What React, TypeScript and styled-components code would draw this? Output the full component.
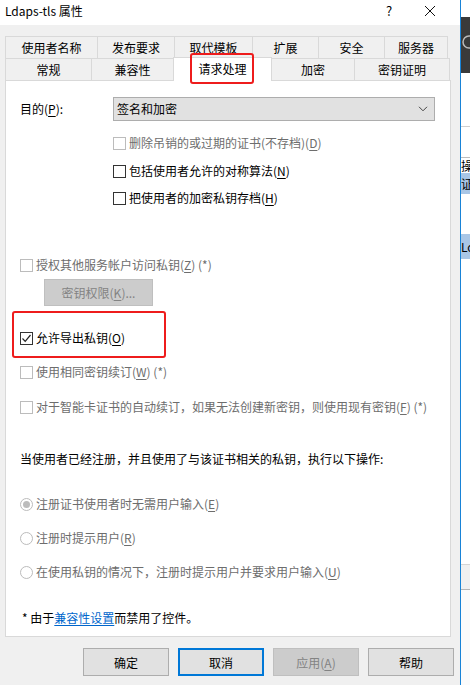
import React from "react";
import styled, { createGlobalStyle } from "styled-components";

const Global = createGlobalStyle`
  html, body { margin: 0; padding: 0; }
  body {
    width: 470px; height: 685px; overflow: hidden; background: #ffffff;
    font-family: "Noto Sans CJK SC", "Noto Sans", sans-serif;
    font-size: 12px; color: #000;
  }
  u { text-underline-offset: 2px; }
`;

const Screen = styled.div`
  display: flex;
  width: 470px;
  height: 685px;
`;

const Dialog = styled.div`
  width: 460px;
  height: 685px;
  display: flex;
  flex-direction: column;
  background: #f0f0f0;
  border-right: 1px solid #1883d7;
`;

const TitleBar = styled.div`
  height: 25px;
  background: #fff;
  display: flex;
  align-items: center;
  padding: 0 0 4px 5px;
  box-sizing: border-box;
`;

const TitleText = styled.div`
  flex: 1;
  font-size: 12px;
  line-height: 16px;
`;

const TitleBtn = styled.div<{ $w: number }>`
  width: ${(p) => p.$w}px;
  display: flex;
  justify-content: center;
  align-items: center;
  font-size: 13px;
  line-height: 16px;
`;

const Body = styled.div`
  flex: 1;
  padding: 11px 0 0 5px;
  display: flex;
  flex-direction: column;
`;

const TabRow = styled.div`
  display: flex;
  height: 22px;
  align-items: flex-start;
`;

const Tab = styled.div<{ $w: number; $last?: boolean }>`
  width: ${(p) => p.$w}px;
  height: 22px;
  box-sizing: border-box;
  border-top: 1px solid #d9d9d9;
  border-left: 1px solid #d9d9d9;
  border-right: ${(p) => (p.$last ? "1px solid #d9d9d9" : "none")};
  display: flex;
  justify-content: center;
  align-items: center;
  font-size: 12px;
  line-height: 16px;
  padding-top: 1px;
`;

const ActiveTab = styled.div<{ $w: number }>`
  position: relative;
  z-index: 2;
  width: ${(p) => p.$w}px;
  height: 24px;
  margin-top: -1px;
  box-sizing: border-box;
  background: #fff;
  border: 1px solid #d9d9d9;
  border-bottom: none;
  display: flex;
  justify-content: center;
  align-items: center;
  font-size: 12px;
  line-height: 16px;
  padding-bottom: 1px;
`;

const RedMark = styled.span<{ $l: number; $t: number; $w: number; $h: number }>`
  position: absolute;
  left: ${(p) => p.$l}px;
  top: ${(p) => p.$t}px;
  width: ${(p) => p.$w}px;
  height: ${(p) => p.$h}px;
  border: 2px solid #ee1c1c;
  border-radius: 3px;
  box-sizing: border-box;
  pointer-events: none;
`;

const Panel = styled.div`
  width: 446px;
  height: 557px;
  box-sizing: border-box;
  background: #fff;
  border: 1px solid #d9d9d9;
  padding: 16px 0 0 14px;
  display: flex;
  flex-direction: column;
`;

const Row = styled.div<{ $top: number; $indent?: number; $h?: number }>`
  position: relative;
  display: flex;
  align-items: center;
  margin-top: ${(p) => p.$top}px;
  margin-left: ${(p) => p.$indent || 0}px;
  height: ${(p) => p.$h || 16}px;
  line-height: 16px;
  white-space: nowrap;
`;

const Label = styled.span<{ $disabled?: boolean; $w?: number }>`
  color: ${(p) => (p.$disabled ? "#6d6d6d" : "#000")};
  ${(p) => (p.$w ? `width: ${p.$w}px;` : "")}
`;

const Box = styled.span<{ $disabled?: boolean }>`
  width: 13px;
  height: 13px;
  box-sizing: border-box;
  border: 1px solid ${(p) => (p.$disabled ? "#bcbcbc" : "#333")};
  background: #fff;
  margin-right: 3px;
  display: flex;
  align-items: center;
  justify-content: center;
  flex-shrink: 0;
`;

const Radio = styled.span<{ $checked?: boolean }>`
  width: 13px;
  height: 13px;
  box-sizing: border-box;
  border-radius: 50%;
  border: 1px solid #bcbcbc;
  background: #fff;
  margin-right: 3px;
  display: flex;
  align-items: center;
  justify-content: center;
  flex-shrink: 0;
  &::after {
    content: "";
    display: ${(p) => (p.$checked ? "block" : "none")};
    width: 7px;
    height: 7px;
    border-radius: 50%;
    background: #bcbcbc;
  }
`;

const Select = styled.div`
  width: 322px;
  height: 24px;
  box-sizing: border-box;
  background: #e1e1e1;
  border: 1px solid #adadad;
  display: flex;
  align-items: center;
  padding: 0 6px 0 3px;
  justify-content: space-between;
`;

const PermButton = styled.div`
  width: 109px;
  height: 27px;
  box-sizing: border-box;
  background: #cccccc;
  border: 1px solid #bfbfbf;
  color: #838383;
  display: flex;
  align-items: center;
  justify-content: center;
`;

const Link = styled.span`
  color: #0066cc;
  text-decoration: underline;
  text-underline-offset: 2px;
`;

const ButtonRow = styled.div`
  display: flex;
  gap: 9px;
  margin: 11px 0 0 78px;
`;

const DlgButton = styled.div<{ $focus?: boolean; $disabled?: boolean }>`
  width: 86px;
  height: 28px;
  box-sizing: border-box;
  background: ${(p) => (p.$disabled ? "#cccccc" : "#e1e1e1")};
  border: ${(p) =>
    p.$focus ? "2px solid #0078d7" : p.$disabled ? "1px solid #bfbfbf" : "1px solid #adadad"};
  color: ${(p) => (p.$disabled ? "#838383" : "#000")};
  display: flex;
  align-items: center;
  justify-content: center;
  font-size: 12px;
`;

const Strip = styled.div`
  width: 9px;
  height: 685px;
  display: flex;
  flex-direction: column;
  overflow: hidden;
  background: #fff;
`;

const StripBlock = styled.div<{ $h: number; $bg: string; $line?: string }>`
  height: ${(p) => p.$h}px;
  flex-shrink: 0;
  background: ${(p) => p.$bg};
  border-bottom: ${(p) => (p.$line ? `1px solid ${p.$line}` : "none")};
  box-sizing: border-box;
  overflow: hidden;
  white-space: nowrap;
  font-size: 12px;
  line-height: ${(p) => p.$h}px;
  display: flex;
  align-items: center;
`;

const Check = () => (
  <svg width="11" height="11" viewBox="0 0 11 11">
    <path d="M1.5 5.5 L4.2 8.3 L9.5 2" fill="none" stroke="#222" strokeWidth="1.2" />
  </svg>
);

const Chevron = () => (
  <svg width="10" height="6" viewBox="0 0 10 6">
    <path d="M1 0.8 L5 4.8 L9 0.8" fill="none" stroke="#444" strokeWidth="1" />
  </svg>
);

const CloseX = () => (
  <svg width="12" height="12" viewBox="0 0 12 12">
    <path d="M1 1 L11 11 M11 1 L1 11" stroke="#111" strokeWidth="1" />
  </svg>
);

const row1 = [
  ["使用者名称", 92],
  ["发布要求", 77],
  ["取代模板", 78],
  ["扩展", 66],
  ["安全", 66],
  ["服务器", 64],
] as const;

export default function App() {
  return (
    <>
      <Global />
      <Screen>
        <Dialog>
          <TitleBar>
            <TitleText>Ldaps-tls 属性</TitleText>
            <TitleBtn $w={22}>?</TitleBtn>
            <TitleBtn $w={60}>
              <CloseX />
            </TitleBtn>
          </TitleBar>
          <Body>
            <TabRow>
              {row1.map(([t, w], i) => (
                <Tab key={t} $w={w} $last={i === row1.length - 1}>
                  {t}
                </Tab>
              ))}
            </TabRow>
            <TabRow>
              <Tab $w={86}>常规</Tab>
              <Tab $w={82}>兼容性</Tab>
              <ActiveTab $w={99}>
                请求处理
                <RedMark $l={16} $t={-5} $w={64} $h={31} />
              </ActiveTab>
              <Tab $w={82} style={{ borderLeft: "none" }}>加密</Tab>
              <Tab $w={96} $last>
                密钥证明
              </Tab>
            </TabRow>
            <Panel>
              <Row $top={0} $h={24}>
                <Label $w={93}>
                  目的(<u>P</u>):
                </Label>
                <Select>
                  <span>签名和加密</span>
                  <Chevron />
                </Select>
              </Row>
              <Row $top={14} $indent={93}>
                <Box $disabled />
                <Label $disabled>
                  删除吊销的或过期的证书(不存档)(<u>D</u>)
                </Label>
              </Row>
              <Row $top={12} $indent={93}>
                <Box />
                <Label>
                  包括使用者允许的对称算法(<u>N</u>)
                </Label>
              </Row>
              <Row $top={11} $indent={93}>
                <Box />
                <Label>
                  把使用者的加密私钥存档(<u>H</u>)
                </Label>
              </Row>
              <Row $top={51}>
                <Box $disabled />
                <Label $disabled>
                  授权其他服务帐户访问私钥(<u>Z</u>) (*)
                </Label>
              </Row>
              <Row $top={6} $indent={24} $h={27}>
                <PermButton>
                  密钥权限(<u>K</u>)...
                </PermButton>
              </Row>
              <Row $top={24}>
                <Box>
                  <Check />
                </Box>
                <Label>
                  允许导出私钥(<u>O</u>)
                </Label>
                <RedMark $l={-8} $t={-19} $w={154} $h={47} />
              </Row>
              <Row $top={18}>
                <Box $disabled />
                <Label $disabled>
                  使用相同密钥续订(<u>W</u>) (*)
                </Label>
              </Row>
              <Row $top={19}>
                <Box $disabled />
                <Label $disabled>
                  对于智能卡证书的自动续订，如果无法创建新密钥，则使用现有密钥(<u>F</u>) (*)
                </Label>
              </Row>
              <Row $top={36}>
                <Label>当使用者已经注册，并且使用了与该证书相关的私钥，执行以下操作:</Label>
              </Row>
              <Row $top={29}>
                <Radio $checked />
                <Label $disabled>
                  注册证书使用者时无需用户输入(<u>E</u>)
                </Label>
              </Row>
              <Row $top={18}>
                <Radio />
                <Label $disabled>
                  注册时提示用户(<u>R</u>)
                </Label>
              </Row>
              <Row $top={18}>
                <Radio />
                <Label $disabled>
                  在使用私钥的情况下，注册时提示用户并要求用户输入(<u>U</u>)
                </Label>
              </Row>
              <Row $top={30} $indent={2}>
                <Label>
                  * 由于<Link>兼容性设置</Link>而禁用了控件。
                </Label>
              </Row>
            </Panel>
            <ButtonRow>
              <DlgButton>确定</DlgButton>
              <DlgButton $focus>取消</DlgButton>
              <DlgButton $disabled>
                应用(<u>A</u>)
              </DlgButton>
              <DlgButton>帮助</DlgButton>
            </ButtonRow>
          </Body>
        </Dialog>
        <Strip>
          <StripBlock $h={17} $bg="#ffffff" />
          <StripBlock $h={56} $bg="#3a3a3a">
            <svg width="9" height="16" viewBox="0 0 9 16" style={{ marginTop: -6 }}>
              <circle cx="8" cy="8" r="6" fill="none" stroke="#bbb" strokeWidth="1.5" />
            </svg>
          </StripBlock>
          <StripBlock $h={54} $bg="#ffffff" $line="#cfcfcf" />
          <StripBlock $h={31} $bg="#ffffff" $line="#bdbdbd" />
          <StripBlock $h={15} $bg="#ffffff">操</StripBlock>
          <StripBlock $h={21} $bg="#a9c6e6">证</StripBlock>
          <StripBlock $h={40} $bg="#ffffff" />
          <StripBlock $h={25} $bg="#a9c6e6">Lo</StripBlock>
          <StripBlock $h={306} $bg="#ffffff" $line="#d5d5d5" />
          <StripBlock $h={25} $bg="#f0f0f0" $line="#b5b5b5" />
          <StripBlock $h={95} $bg="#fbfbfb" />
        </Strip>
      </Screen>
    </>
  );
}
